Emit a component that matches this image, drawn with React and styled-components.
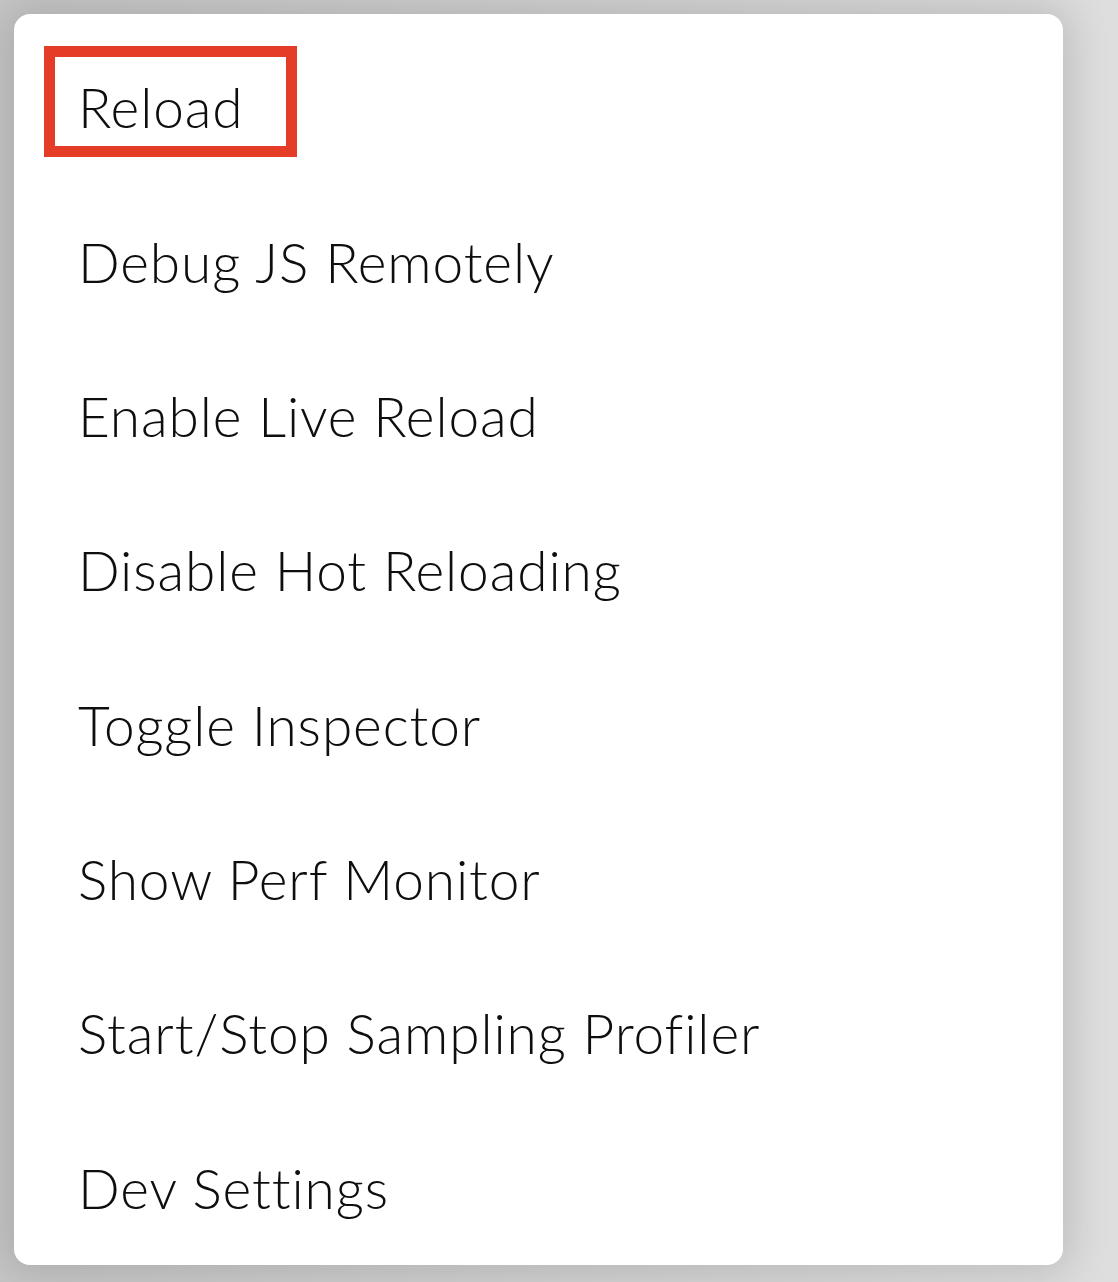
import React from "react";
import styled, {createGlobalStyle} from "styled-components";

const items = [
  "Reload",
  "Debug JS Remotely",
  "Enable Live Reload",
  "Disable Hot Reloading",
  "Toggle Inspector",
  "Show Perf Monitor",
  "Start/Stop Sampling Profiler",
  "Dev Settings",
];

const App = () => {
  return (
      <Screen>
        <GlobalStyle/>
        <Menu>
          {items.map((label, i) => (
              <Row key={label}>
                {i === 0 && <Highlight/>}
                <Label>{label}</Label>
              </Row>
          ))}
        </Menu>
      </Screen>
  );
};

export default App;

const GlobalStyle = createGlobalStyle`
  html, body {
    margin: 0;
    padding: 0;
    background: #dcdcdc;
  }
`;

const Screen = styled.div`
  width: 1118px;
  height: 1282px;
  box-sizing: border-box;
  padding: 14px 55px 17px 14px;
  background: linear-gradient(90deg, #c6c6c6 0%, #d4d4d4 60%, #dedede 100%);
  overflow: hidden;
`;

const Menu = styled.div`
  width: 1049px;
  height: 1251px;
  box-sizing: border-box;
  padding-top: 16px;
  background: #fff;
  border-radius: 16px;
  box-shadow: 0 0 40px 8px rgba(0, 0, 0, 0.14);
  display: flex;
  flex-direction: column;
`;

const Row = styled.div`
  position: relative;
  height: 154.6px;
  display: flex;
  align-items: center;
  padding-left: 64px;
`;

const Label = styled.span`
  font-family: Lato, "Liberation Sans", sans-serif;
  font-size: 55px;
  font-weight: 300;
  color: #0e0e0e;
  letter-spacing: 0.9px;
`;

const Highlight = styled.div`
  position: absolute;
  left: 30px;
  top: 16px;
  width: 253px;
  height: 111px;
  box-sizing: border-box;
  border: 11px solid #e43c27;
`;
